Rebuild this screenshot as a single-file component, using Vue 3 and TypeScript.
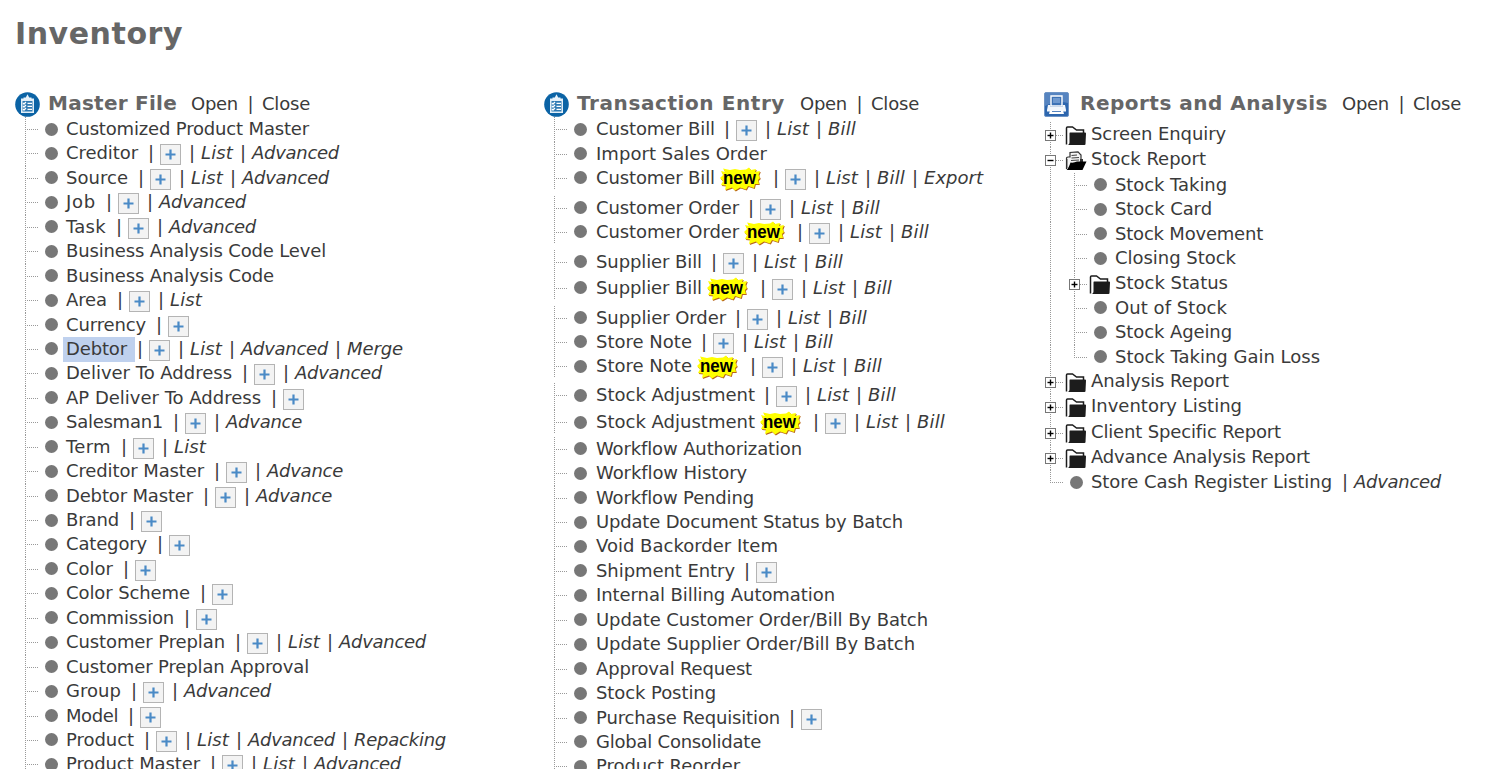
<script setup lang="ts">
type Kind = 'leaf' | 'closed' | 'open'

interface Row {
  label: string
  width: number
  height: number
  links: string[]
  add: boolean
  fresh: boolean
  selected: boolean
  kind: Kind
  depth: number
  last: boolean
}

interface Section {
  title: string
  width: number
  icon: 'clipboard' | 'printer'
  rows: Row[]
}

const FAMILY = '"DejaVu Sans", sans-serif'
const pen = document.createElement('canvas').getContext('2d')!

// Spreads a label evenly over the width that its row reserves for it.
function tracking(text: string, width: number, font: string): { letterSpacing: string } {
  pen.font = font
  const natural = pen.measureText(text).width
  return { letterSpacing: ((width + 1 - natural) / text.length).toFixed(3) + 'px' }
}
const plain = (t: string, w: number) => tracking(t, w, `18px ${FAMILY}`)
const italic = (t: string, w: number) => tracking(t, w, `italic 18px ${FAMILY}`)
const bold = (t: string, w: number, size: number) => tracking(t, w, `bold ${size}px ${FAMILY}`)

const linkWidths: Record<string, number> = {
  List: 31, Advanced: 86, Advance: 75, Bill: 27, Merge: 55, Export: 58, Repacking: 91,
}

function row(label: string, width: number, flags = '', links = '', extra: Partial<Row> = {}): Row {
  return {
    label,
    width,
    height: 24.44,
    links: links ? links.split(' ') : [],
    add: flags.includes('+'),
    fresh: flags.includes('n'),
    selected: flags.includes('s'),
    kind: 'leaf',
    depth: 0,
    last: false,
    ...extra,
  }
}

const h = (height: number): Partial<Row> => ({ height })

const sections: Section[] = [
  {
    title: 'Master File',
    width: 128,
    icon: 'clipboard',
    rows: [
      row('Customized Product Master', 242),
      row('Creditor', 71, '+', 'List Advanced'),
      row('Source', 61, '+', 'List Advanced'),
      row('Job', 29, '+', 'Advanced'),
      row('Task', 39, '+', 'Advanced'),
      row('Business Analysis Code Level', 259),
      row('Business Analysis Code', 207),
      row('Area', 40, '+', 'List'),
      row('Currency', 79, '+'),
      row('Debtor', 60, '+s', 'List Advanced Merge'),
      row('Deliver To Address', 165, '+', 'Advanced'),
      row('AP Deliver To Address', 194, '+'),
      row('Salesman1', 96, '+', 'Advance'),
      row('Term', 44, '+', 'List'),
      row('Creditor Master', 137, '+', 'Advance'),
      row('Debtor Master', 126, '+', 'Advance'),
      row('Brand', 52, '+'),
      row('Category', 80, '+'),
      row('Color', 46, '+'),
      row('Color Scheme', 123, '+'),
      row('Commission', 107, '+'),
      row('Customer Preplan', 158, '+', 'List Advanced'),
      row('Customer Preplan Approval', 242),
      row('Group', 54, '+', 'Advanced'),
      row('Model', 51, '+'),
      row('Product', 67, '+', 'List Advanced Repacking'),
      row('Product Master', 133, '+', 'List Advanced'),
    ],
  },
  {
    title: 'Transaction Entry',
    width: 207,
    icon: 'clipboard',
    rows: [
      row('Customer Bill', 118, '+', 'List Bill', h(24.6)),
      row('Import Sales Order', 170, '', '', h(24)),
      row('Customer Bill', 118, '+n', 'List Bill Export', h(30)),
      row('Customer Order', 142, '+', 'List Bill', h(24)),
      row('Customer Order', 142, '+n', 'List Bill', h(30)),
      row('Supplier Bill', 105, '+', 'List Bill', h(26)),
      row('Supplier Bill', 105, '+n', 'List Bill', h(30)),
      row('Supplier Order', 129, '+', 'List Bill', h(24)),
      row('Store Note', 95, '+', 'List Bill', h(24.6)),
      row('Store Note', 95, '+n', 'List Bill', h(29)),
      row('Stock Adjustment', 158, '+', 'List Bill', h(27)),
      row('Stock Adjustment', 158, '+n', 'List Bill', h(26.5)),
      row('Workflow Authorization', 205),
      row('Workflow History', 150),
      row('Workflow Pending', 157),
      row('Update Document Status by Batch', 306),
      row('Void Backorder Item', 181),
      row('Shipment Entry', 138, '+'),
      row('Internal Billing Automation', 238),
      row('Update Customer Order/Bill By Batch', 331),
      row('Update Supplier Order/Bill By Batch', 318),
      row('Approval Request', 155),
      row('Stock Posting', 119),
      row('Purchase Requisition', 183, '+'),
      row('Global Consolidate', 164),
      row('Product Reorder', 143),
    ],
  },
  {
    title: 'Reports and Analysis',
    width: 247,
    icon: 'printer',
    rows: [
      row('Screen Enquiry', 134, '', '', { kind: 'closed', height: 25.3 }),
      row('Stock Report', 114, '', '', { kind: 'open', height: 25.7 }),
      row('Stock Taking', 111, '', '', { depth: 1 }),
      row('Stock Card', 96, '', '', { depth: 1 }),
      row('Stock Movement', 147, '', '', { depth: 1 }),
      row('Closing Stock', 120, '', '', { depth: 1 }),
      row('Stock Status', 112, '', '', { depth: 1, kind: 'closed', height: 25 }),
      row('Out of Stock', 111, '', '', { depth: 1 }),
      row('Stock Ageing', 116, '', '', { depth: 1 }),
      row('Stock Taking Gain Loss', 204, '', '', { depth: 1, last: true }),
      row('Analysis Report', 137, '', '', { kind: 'closed', height: 25.4 }),
      row('Inventory Listing', 150, '', '', { kind: 'closed', height: 25.2 }),
      row('Client Specific Report', 189, '', '', { kind: 'closed', height: 25.2 }),
      row('Advance Analysis Report', 218, '', '', { kind: 'closed', height: 25.4 }),
      row('Store Cash Register Listing', 240, '', 'Advanced', { last: true }),
    ],
  },
]
</script>

<template>
  <main class="page">
    <h1><span :style="bold('Inventory', 167, 30)">Inventory</span></h1>
    <div class="columns">
      <section v-for="s in sections" :key="s.title" :class="['column', s.icon]">
        <header>
          <svg v-if="s.icon === 'clipboard'" class="badge" viewBox="0 0 25 25">
            <circle cx="12.5" cy="12.5" r="12.3" fill="#0b63a5" />
            <path d="M6 6.500h13v14.500H6z" fill="#e3eff8" />
            <path d="M8.500 7.500V5.500h2.300l1.700-3.300 1.700 3.300h2.300v2z" fill="#e8f2fa" />
            <path d="M7.500 9h10v10.500h-10z" fill="#2f7ab3" />
            <path d="M8 11l1 1 2-2M8 14l1 1 2-2M8 17l1 1 2-2M12.500 11.300h4.500M12.500 14.300h4.500M12.500 17.300h4.500" fill="none" stroke="#fff" stroke-width="1.300" />
          </svg>
          <svg v-else class="badge" viewBox="0 0 25 25">
            <rect x=".5" y=".5" width="24" height="24" rx="1.500" fill="#2d66ae" stroke="#6f95c6" />
            <path d="M1 1h23v10Q12 8 1 14z" fill="#5684c0" />
            <path d="M7 4h11v10H7z" fill="#3d72b5" stroke="#fff" stroke-width="1.400" />
            <path d="M9 6h7v5H9z" fill="#6f99cf" />
            <path d="M4 13h2.500v2h12v-2H21l1 5v1.500H3V18z" fill="#f3f7fc" />
            <path d="M6 18.500h13l1 3.500H5z" fill="#fff" />
            <path d="M8 19.500h9" stroke="#5684c0" />
          </svg>
          <h2><span :style="bold(s.title, s.width, 20)">{{ s.title }}</span></h2>
          <a class="t" :style="[plain('Open', 46), { width: '46px' }]">Open</a>
          <i class="pipe wide">|</i>
          <a class="t" :style="plain('Close', 47)">Close</a>
        </header>

        <div v-for="(r, i) in s.rows" :key="i" class="row" :style="{ height: r.height + 'px' }">
          <span v-if="r.depth" class="rail"></span>
          <span :class="['guide', r.kind, { last: r.last, gap: r.fresh }]">
            <svg v-if="r.kind !== 'leaf'" class="toggle" viewBox="0 0 11 11">
              <rect x=".5" y=".5" width="10" height="10" fill="#fff" stroke="#777" />
              <path d="M2.500 5.500h6" stroke="#000" stroke-width="1.400" />
              <path v-if="r.kind === 'closed'" d="M5.500 2.500v6" stroke="#000" stroke-width="1.400" />
            </svg>
          </span>
          <span v-if="r.kind === 'leaf'" class="dot"><b></b></span>
          <svg v-else-if="r.kind === 'closed'" class="folder" viewBox="0 0 22 20">
            <path d="M1.500 18.500V2Q1.500 1 2.500 1H7.500L11.500 4H18.500V7" fill="#fff" stroke="#1c1c1c" stroke-width="1.500" />
            <path d="M5 6.500H20Q21 6.500 21 7.500L20.500 18Q20.500 19 19.500 19H3Q4.500 18 4.500 16.500V7.500Q4.500 6.500 5 6.500z" fill="#1c1c1c" />
          </svg>
          <svg v-else class="folder" viewBox="0 0 22 20">
            <path d="M1.500 18V7Q1.500 6 3 6H5V1.500L13 .8L16 4V11" fill="#f4f4f4" stroke="#333" stroke-width="1.200" />
            <path d="M6.500 4.500L12 4M6.500 7L14 6.500M6 9.500L14 9" stroke="#444" stroke-width="1.200" />
            <path d="M2.500 8v9" stroke="#999" />
            <path d="M15 8h3v3h-3z" fill="#333" />
            <path d="M5.500 11.500Q9 12 12 10.500H21.500L17.500 19H1.500Q3.500 17.500 5.500 11.500z" fill="#000" />
          </svg>
          <span :class="['name', { selected: r.selected }]">
            <a class="t" :style="[plain(r.label, r.width), { width: r.width + 'px' }]">{{ r.label }}</a>
          </span>
          <svg v-if="r.fresh" class="new" viewBox="0 0 42 26">
            <path class="shade" d="M2 5L6 6 4 2.500 11 4 16 3 21 4 27 3.500 30 1.500 32 4 37 3 36 6 41 5 39.500 9 41 12 39 14 40 18 36 18 35 22 29 20 27 23.500 21 21.500 16 24.500 13 21.500 6 24 7 19.500 2 19 4 15 1 12 4 9z" />
            <path class="burst" d="M2 5L6 6 4 2.500 11 4 16 3 21 4 27 3.500 30 1.500 32 4 37 3 36 6 41 5 39.500 9 41 12 39 14 40 18 36 18 35 22 29 20 27 23.500 21 21.500 16 24.500 13 21.500 6 24 7 19.500 2 19 4 15 1 12 4 9z" />
            <text x="4" y="18" textLength="33" lengthAdjust="spacingAndGlyphs">new</text>
          </svg>
          <template v-if="r.add">
            <i class="pipe first">|</i>
            <svg class="plus" viewBox="0 0 21 21">
              <rect x=".5" y=".5" width="20" height="20" fill="#f3f3f3" stroke="#b4b4b4" />
              <path d="M10.500 5.500v10M5.500 10.500h10" stroke="#4a8ac6" stroke-width="2.200" />
            </svg>
          </template>
          <template v-for="(l, n) in r.links" :key="l">
            <i :class="['pipe', { first: !r.add && n === 0 }]">|</i>
            <a class="t em" :style="[italic(l, linkWidths[l]), { width: linkWidths[l] + 'px' }]">{{ l }}</a>
          </template>
        </div>
      </section>
    </div>
  </main>
</template>

<style>
html,
body {
  margin: 0;
  overflow: hidden;
  background: #fff;
}
</style>

<style scoped>
.page {
  width: 1500px;
  height: 769px;
  box-sizing: border-box;
  padding: 14px 0 0 15px;
  overflow: hidden;
  background: #fff;
  color: #3a3a3a;
  font: 18px/24px "DejaVu Sans", sans-serif;
}
h1,
h2 {
  margin: 0;
  color: #666;
  font-weight: bold;
  white-space: nowrap;
}
h1 {
  height: 77px;
  font-size: 30px;
  line-height: 40px;
}
h2 {
  width: 143px;
  margin-left: 8px;
  font-size: 20px;
  line-height: 24px;
}
.columns {
  display: grid;
  grid-template-columns: 529px 500px 1fr;
}
.column:nth-child(2) h2 {
  width: 223px;
}
.column:nth-child(3) h2 {
  width: 262px;
  margin-left: 11px;
}
header {
  display: flex;
  height: 26px;
}
.printer header {
  height: 31px;
}
.badge {
  flex: none;
  width: 25px;
  height: 25px;
  margin-top: 1px;
}
header .t,
header .pipe {
  margin-top: 1px;
}
.row {
  display: flex;
  padding-left: 10px;
}
.printer .row {
  padding-left: 6px;
}
.t {
  flex: none;
  white-space: nowrap;
  line-height: 24px;
}
.em {
  font-style: italic;
}
.name {
  flex: none;
  height: 24px;
}
.column:nth-child(2) .name {
  margin: 0 -1px 0 1px;
}
.name.selected {
  height: 25px;
  margin: 0 -8px 0 -3px;
  padding: 0 8px 0 3px;
  background: #bfd1ee;
}
.rail,
.guide {
  flex: none;
  align-self: stretch;
  background: repeating-linear-gradient(#999 0 1px, #fff 1px 2px) 0 0 / 1px 100% no-repeat;
}
.rail {
  width: 24px;
}
.guide {
  position: relative;
  width: 14px;
  margin-right: 3px;
}
.guide::after {
  content: "";
  position: absolute;
  left: 1px;
  top: 12px;
  width: 13px;
  height: 1px;
  background: repeating-linear-gradient(90deg, #fff 0 1px, #999 1px 2px);
}
.guide.gap {
  background-size: 1px 24px;
}
.guide.last {
  background-size: 1px 13px;
}
.guide.open,
.guide.closed {
  margin-right: 1px;
}
.guide.open::after,
.guide.closed::after {
  top: 13px;
}
.toggle {
  position: absolute;
  z-index: 1;
  left: -5px;
  top: 8px;
  width: 11px;
  height: 11px;
}
.dot {
  flex: none;
  display: flex;
  align-items: center;
  justify-content: center;
  width: 18px;
  height: 24px;
  margin-right: 6px;
}
.dot b {
  width: 13px;
  height: 13px;
  border-radius: 50%;
  background: #777;
}
.folder {
  flex: none;
  width: 22px;
  height: 20px;
  margin: 4px 4px 0 0;
}
.pipe {
  flex: none;
  box-sizing: border-box;
  width: 20px;
  padding-left: 2px;
  text-align: center;
  font-style: normal;
}
.wide {
  width: 25px;
}
.first {
  margin-left: 2px;
}
.plus {
  flex: none;
  width: 21px;
  height: 21px;
  margin-top: 3px;
}
.new {
  flex: none;
  width: 42px;
  height: 26px;
  margin: 0 2px -2px 5px;
}
.shade {
  fill: #b8651c;
  transform: translate(0.8px, 0.9px);
}
.burst {
  fill: #ff0;
}
.new text {
  fill: #000;
  font: bold 18px "Liberation Sans", sans-serif;
}
</style>
